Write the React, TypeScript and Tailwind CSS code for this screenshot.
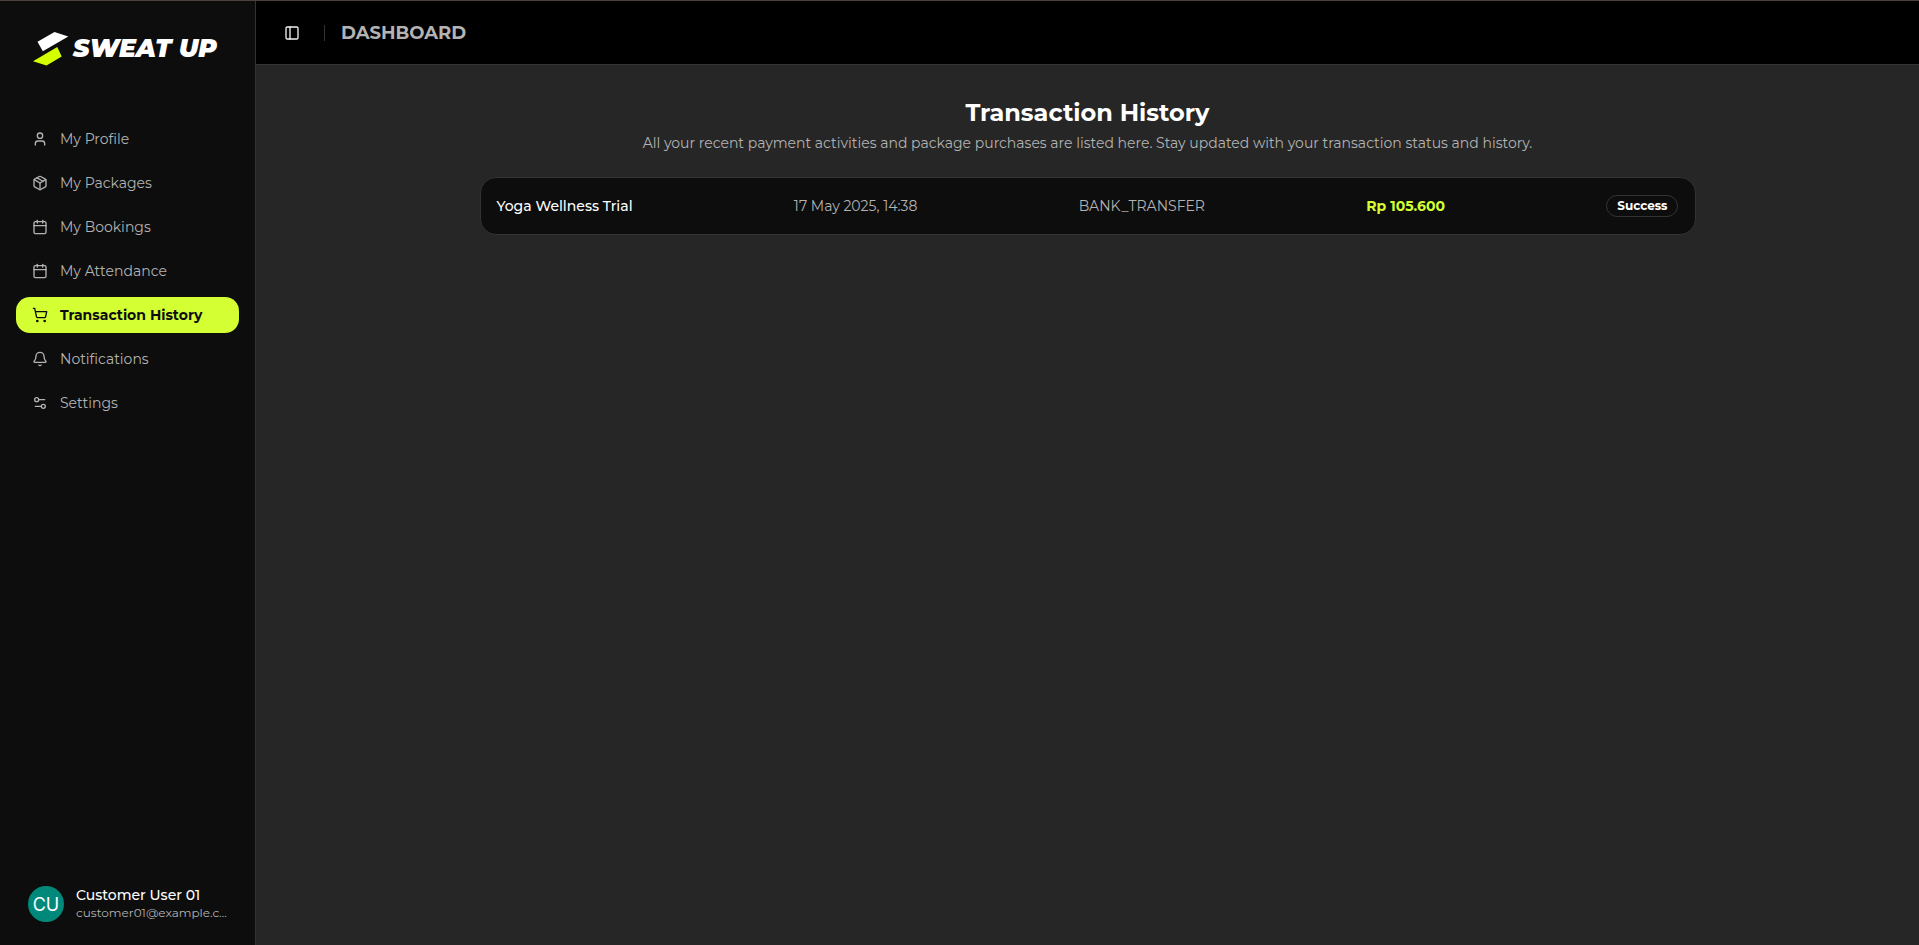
import {
  Bell,
  Calendar,
  Package,
  PanelLeft,
  Settings2,
  ShoppingCart,
  User,
  type LucideIcon,
} from "lucide-react";

type NavItem = { label: string; icon: LucideIcon; active?: boolean };

const navItems: NavItem[] = [
  { label: "My Profile", icon: User },
  { label: "My Packages", icon: Package },
  { label: "My Bookings", icon: Calendar },
  { label: "My Attendance", icon: Calendar },
  { label: "Transaction History", icon: ShoppingCart, active: true },
  { label: "Notifications", icon: Bell },
  { label: "Settings", icon: Settings2 },
];

const transactions = [
  {
    name: "Yoga Wellness Trial",
    date: "17 May 2025, 14:38",
    method: "BANK_TRANSFER",
    amount: "Rp 105.600",
    status: "Success",
  },
];

function Logo() {
  return (
    <a href="#" className="flex items-start gap-1 px-4 pt-[15px]">
      <svg viewBox="0 0 37 35" className="h-[35px] w-[37px] shrink-0" aria-hidden="true">
        <path d="M5.5 9.7 22.5 0 36.3 4.4 10.8 19.2Z" fill="#fff" />
        <path d="M1 29.2 25.3 15 29.7 24.4 14.5 33.6Z" fill="#d4ff00" />
      </svg>
      <span className="pt-1 text-[25px] leading-6 font-black whitespace-nowrap text-white italic">SWEAT UP</span>
    </a>
  );
}

function Sidebar() {
  return (
    <aside className="flex w-64 shrink-0 flex-col border-r border-[#333] bg-[#0d0d0d] px-4 pt-4 pb-[17px]">
      <Logo />
      <nav className="mt-[54px] flex flex-col gap-2">
        {navItems.map(({ label, icon: Icon, active }) => (
          <a
            key={label}
            href="#"
            className={
              active
                ? "flex h-9 items-center gap-3 rounded-[14px] bg-[#d4ff33] px-4 text-sm font-bold text-[#0d0d0d]"
                : "flex h-9 items-center gap-3 rounded-[14px] px-4 text-sm text-[#b3b3b3]"
            }
          >
            <Icon size={16} strokeWidth={2} />
            {label}
          </a>
        ))}
      </nav>
      <button type="button" className="mt-auto flex h-12 items-center gap-3 px-3 text-left">
        <span className="flex size-9 shrink-0 items-center justify-center rounded-full bg-[#00897b] font-['Inter',sans-serif] text-[18px] text-white">
          CU
        </span>
        <span className="min-w-0 flex-1">
          <span className="block truncate text-sm leading-[18px] font-medium text-white">Customer User 01</span>
          <span className="block truncate text-xs leading-[18px] text-[#b3b3b3]">customer01@example.com</span>
        </span>
      </button>
    </aside>
  );
}

export default function App() {
  return (
    <div className="flex min-h-screen border-t border-[#4a403c] bg-[#262626] font-['Montserrat','Inter',sans-serif]">
      <Sidebar />
      <div className="flex min-w-0 flex-1 flex-col">
        <header className="flex h-16 items-center border-b border-[#333] bg-black px-[22px]">
          <button type="button" aria-label="Toggle sidebar" className="flex size-7 items-center justify-center text-[#f2f2f2]">
            <PanelLeft size={16} />
          </button>
          <span className="ml-[18px] h-4 w-px bg-[#333]" />
          <h2 className="ml-4 pt-px text-lg font-bold text-[#b3b3b3]">DASHBOARD</h2>
        </header>
        <main className="mx-auto w-full max-w-7xl px-8 pt-8">
          <h1 className="text-center text-2xl leading-8 font-bold text-white">Transaction History</h1>
          <p className="mt-1 text-center text-sm leading-5 text-[#b3b3b3]">
            All your recent payment activities and package purchases are listed here. Stay updated with your transaction
            status and history.
          </p>
          <ul className="mt-6 flex flex-col gap-4">
            {transactions.map((t) => (
              <li
                key={t.name}
                className="flex h-[58px] items-center justify-between rounded-2xl border border-[#333] bg-[#0d0d0d] px-4 text-sm"
              >
                <span className="font-medium text-white">{t.name}</span>
                <span className="text-[#b3b3b3]">{t.date}</span>
                <span className="text-[#b3b3b3]">{t.method}</span>
                <span className="font-bold text-[#d4ff33]">{t.amount}</span>
                <span className="rounded-full border border-[#333] px-2.5 py-0.5 text-xs leading-4 font-bold text-white">
                  {t.status}
                </span>
              </li>
            ))}
          </ul>
        </main>
      </div>
    </div>
  );
}
